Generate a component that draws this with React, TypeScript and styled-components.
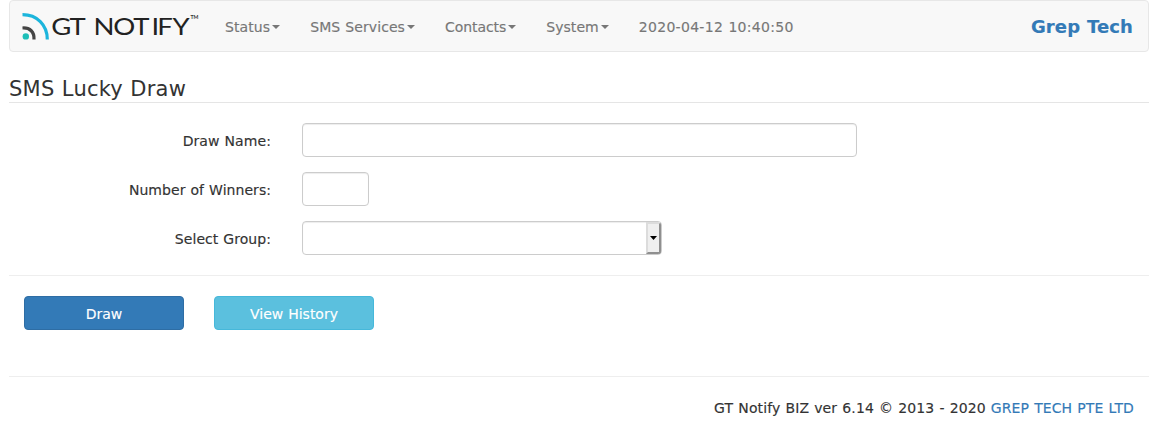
import React from "react";
import styled, { createGlobalStyle } from "styled-components";

const GlobalStyle = createGlobalStyle`
  * { box-sizing: border-box; }
  body {
    margin: 0;
    background: #fff;
    color: #333;
    font: 14px/20px Verdana, "DejaVu Sans", sans-serif;
    word-spacing: 0.5px;
    -webkit-text-stroke: 0.15px;
  }
`;

const Page = styled.div`
  padding: 0 9px;
`;

const Navbar = styled.nav`
  display: flex;
  align-items: center;
  height: 52px;
  padding: 0 15px 0 11px;
  border: 1px solid #e7e7e7;
  border-radius: 4px;
  background: #f8f8f8;
`;

const Logo = styled.svg`
  display: block;
  width: 180px;
  height: 50px;
  margin-right: 9px;
  word-spacing: 0;
  -webkit-text-stroke: 0;
`;

const Menu = styled.ul`
  display: flex;
  margin: 0;
  padding: 0;
  list-style: none;
`;

const MenuItem = styled.li<{ $tracking: number; $width: number }>`
  display: flex;
  align-items: center;
  width: ${(p) => p.$width}px;
  padding-left: 15px;
  padding-top: 2px;
  color: #777;
  letter-spacing: ${(p) => p.$tracking}px;
  white-space: nowrap;
`;

const Caret = styled.span`
  margin-left: 2px;
  border-top: 4px solid #777;
  border-left: 4px solid transparent;
  border-right: 4px solid transparent;
`;

const Account = styled.a`
  margin-left: auto;
  padding-top: 2px;
  color: #337ab7;
  font-size: 18px;
  font-weight: bold;
  letter-spacing: 0.1px;
`;

const Title = styled.h1`
  height: 31px;
  margin: 20px 0 20px;
  padding-top: 2px;
  border-bottom: 1px solid #e5e5e5;
  font-size: 21px;
  font-weight: normal;
  line-height: 30px;
  letter-spacing: 0.22px;
  -webkit-text-stroke: 0;
`;

const Form = styled.form`
  display: grid;
  gap: 15px;
  padding-bottom: 20px;
  border-bottom: 1px solid #eee;
`;

const Row = styled.div`
  display: grid;
  grid-template-columns: 262px 1fr;
  column-gap: 31px;
  align-items: center;
`;

const Label = styled.label<{ $tracking: number }>`
  padding-top: 2px;
  text-align: right;
  letter-spacing: ${(p) => p.$tracking}px;
`;

const Input = styled.input<{ $width: number }>`
  width: ${(p) => p.$width}px;
  height: 34px;
  padding: 6px 12px;
  border: 1px solid #ccc;
  border-radius: 4px;
  background: #fff;
  box-shadow: inset 0 1px 1px rgba(0, 0, 0, 0.075);
  font: inherit;
  outline: none;
`;

const Select = styled.div`
  display: flex;
  justify-content: flex-end;
  width: 360px;
  height: 34px;
  border: 1px solid #ccc;
  border-radius: 4px;
  box-shadow: inset 0 1px 1px rgba(0, 0, 0, 0.075);
  overflow: hidden;
`;

const SelectButton = styled.span`
  display: flex;
  align-items: center;
  justify-content: center;
  width: 15px;
  height: 32px;
  border: 2px solid;
  border-color: #dcdcdc #8f8f8f #8f8f8f #dcdcdc;
  background: #efefef;
`;

const SelectArrow = styled.svg`
  display: block;
  flex: none;
  width: 7px;
  height: 4px;
`;

const Actions = styled.div`
  display: flex;
  gap: 30px;
  height: 101px;
  padding: 20px 15px 0;
  border-bottom: 1px solid #eee;
`;

const Button = styled.button<{ $bg: string; $edge: string }>`
  width: 160px;
  height: 34px;
  padding: 2px 0 0;
  border: 1px solid ${(p) => p.$edge};
  border-radius: 4px;
  background: ${(p) => p.$bg};
  color: #fff;
  font: inherit;
  word-spacing: inherit;
`;

const Footer = styled.footer`
  display: flex;
  justify-content: flex-end;
  padding: 21px 15px 0 0;
  white-space: pre;
  letter-spacing: 0.12px;
`;

const FooterLink = styled.a`
  color: #337ab7;
  letter-spacing: 0.1px;
`;

const menus = [
  { text: "Status", tracking: 0.1, width: 85.2 },
  { text: "SMS Services", tracking: 0.08, width: 134.8 },
  { text: "Contacts", tracking: -0.07, width: 101.2 },
  { text: "System", tracking: 0.07, width: 92.6 },
];

export default function App() {
  return (
    <>
      <GlobalStyle />
      <Page>
        <Navbar>
          <Logo viewBox="21 1 180 50">
            <path d="M22.5 14.7C37 14.7 47.3 25 47.3 39.5" fill="none" stroke="#1cb5dc" strokeWidth="3.2" />
            <path d="M22.5 28C30 27.5 34.5 32 34 39.5" fill="none" stroke="#444" strokeWidth="3.2" />
            <circle cx="25.8" cy="36.4" r="3.2" fill="#1dbfb8" />
            <text
              transform="scale(1.18 1)"
              x="43.4 58.9 72 79.2 96 113 128.4 133.2 146.2"
              y="34.8"
              fontFamily="Lato, sans-serif"
              fontSize="23.3"
              fill="#222"
            >
              GT NOTIFY
            </text>
            <text x="190.5" y="18.8" fontFamily="Lato, sans-serif" fontSize="5.5" fontWeight="bold" fill="#333" textLength="8" lengthAdjust="spacingAndGlyphs">TM</text>
          </Logo>
          <Menu>
            {menus.map((m) => (
              <MenuItem key={m.text} $tracking={m.tracking} $width={m.width}>
                {m.text}
                <Caret />
              </MenuItem>
            ))}
            <MenuItem $tracking={0.3} $width={185}>2020-04-12 10:40:50</MenuItem>
          </Menu>
          <Account>Grep Tech</Account>
        </Navbar>
        <Title>SMS Lucky Draw</Title>
        <Form>
          <Row>
            <Label $tracking={0.08}>Draw Name:</Label>
            <Input $width={555} />
          </Row>
          <Row>
            <Label $tracking={0.05}>Number of Winners:</Label>
            <Input $width={67} />
          </Row>
          <Row>
            <Label $tracking={0.05}>Select Group:</Label>
            <Select>
              <SelectButton>
                <SelectArrow viewBox="0 0 7 4">
                  <path d="M0 0H7L3.5 4Z" fill="#000" />
                </SelectArrow>
              </SelectButton>
            </Select>
          </Row>
        </Form>
        <Actions>
          <Button $bg="#337ab7" $edge="#2e6da4">Draw</Button>
          <Button $bg="#5bc0de" $edge="#46b8da">View History</Button>
        </Actions>
        <Footer>
          <span>GT Notify BIZ ver 6.14 © 2013 - 2020 </span>
          <FooterLink>GREP TECH PTE LTD</FooterLink>
        </Footer>
      </Page>
    </>
  );
}
